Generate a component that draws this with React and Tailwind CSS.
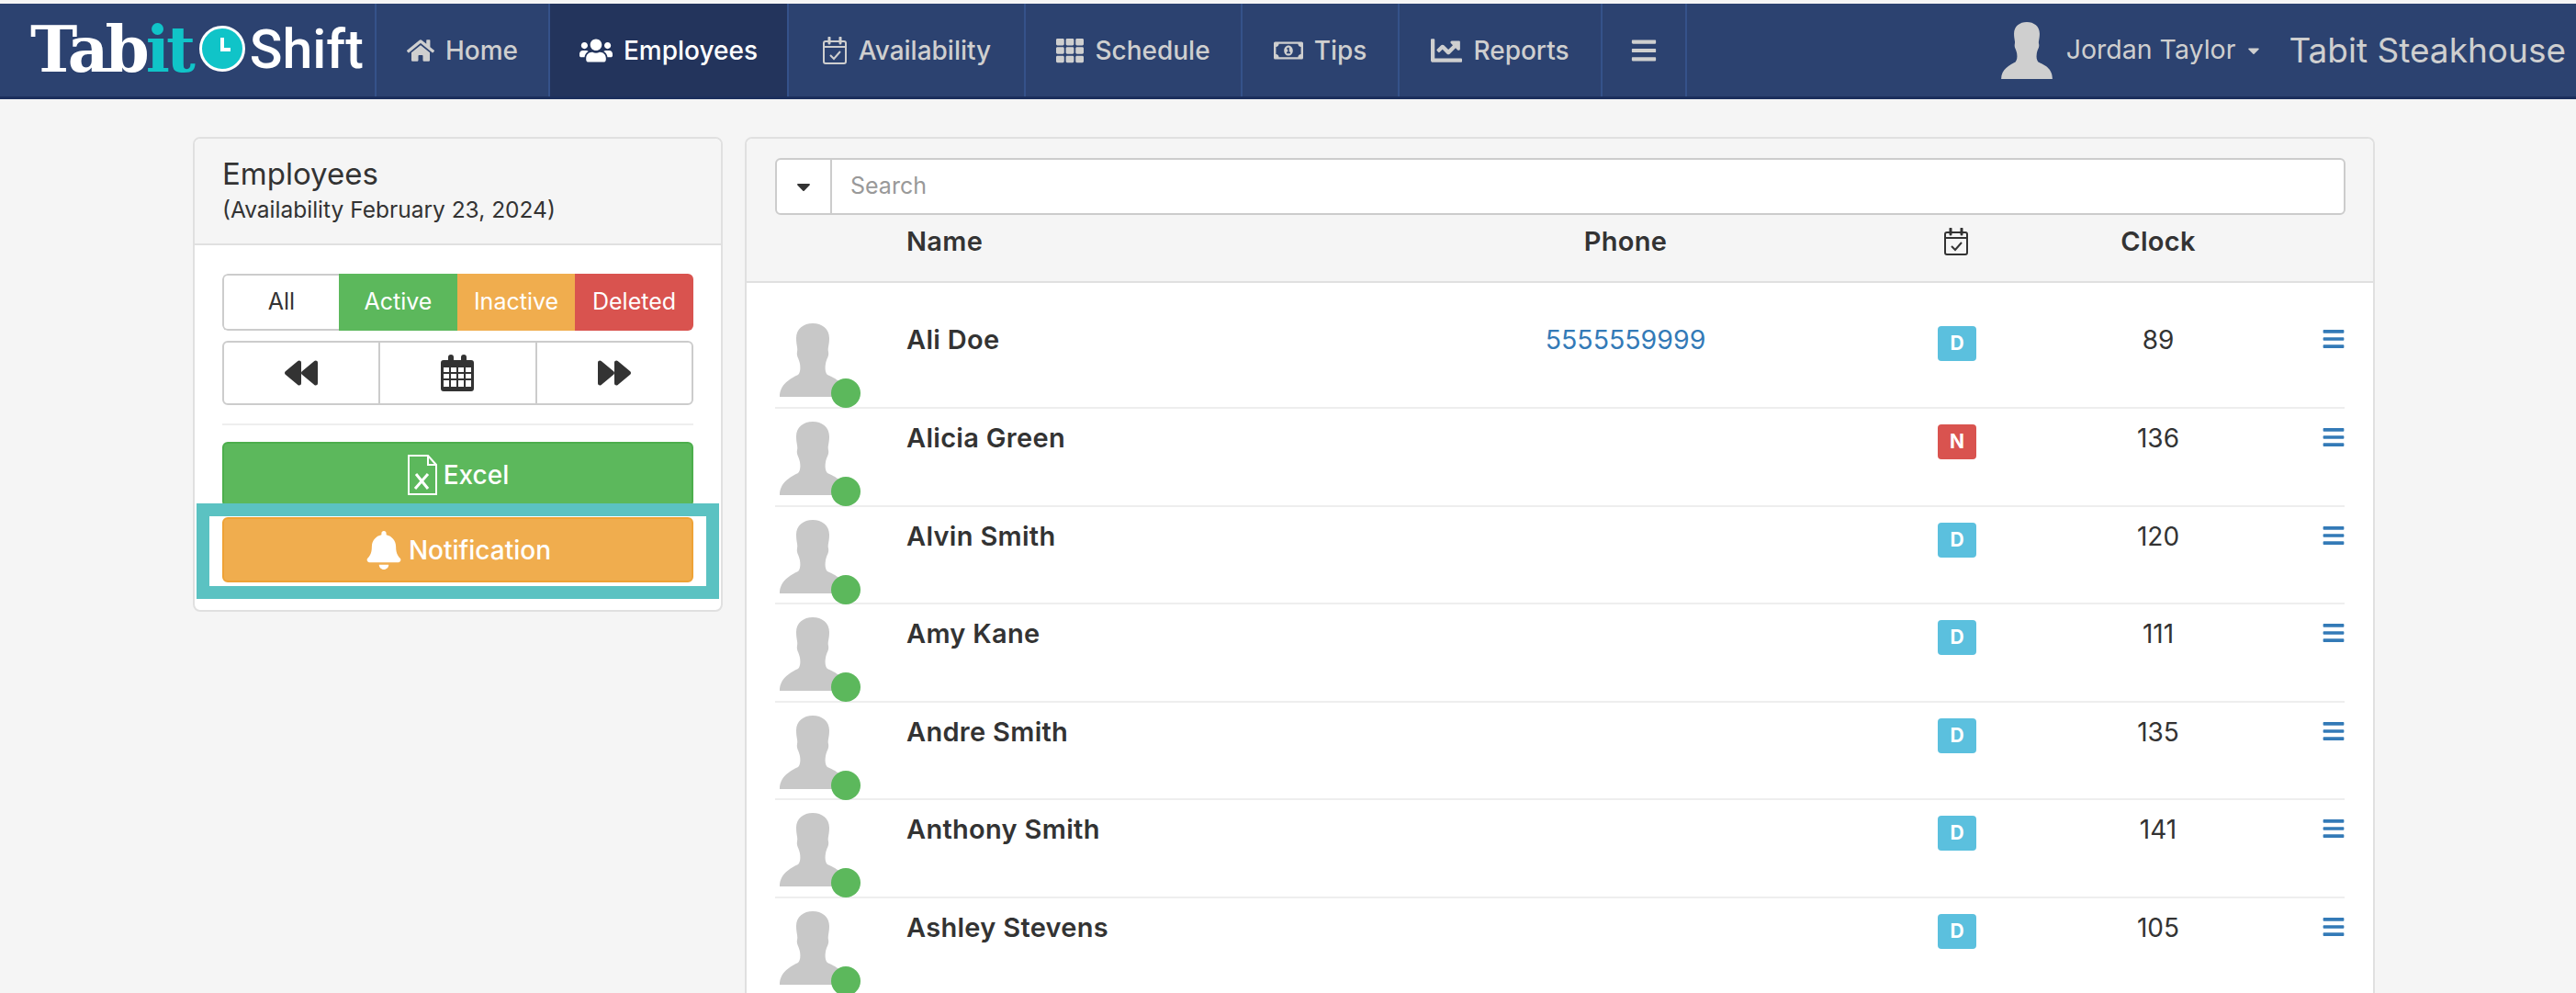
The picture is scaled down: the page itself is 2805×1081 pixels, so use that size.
import React from 'react';
import {
  FaHome, FaUsers, FaTh, FaRegMoneyBillAlt, FaChartLine, FaBars,
  FaBackward, FaForward, FaBell, FaCaretDown,
} from 'react-icons/fa';

function CalendarCheck({ className }) {
  return (
    <svg viewBox="0 0 28 30" className={className} fill="none" stroke="currentColor" strokeWidth="2">
      <rect x="2" y="5" width="24" height="24" rx="2" />
      <path d="M2 11h24" />
      <path d="M8 1v6M20 1v6" strokeWidth="3" strokeLinecap="round" />
      <path d="M9 20l4 4 7-8" />
    </svg>
  );
}

const navItems = [
  { label: 'Home', icon: <FaHome className="text-[30px]" />, width: 'w-[189px]' },
  { label: 'Employees', icon: <FaUsers className="text-[36px]" />, width: 'w-[260px]', active: true },
  { label: 'Availability', icon: <CalendarCheck className="w-[28px] h-[30px]" />, width: 'w-[258px]' },
  { label: 'Schedule', icon: <FaTh className="text-[30px]" />, width: 'w-[236px]' },
  { label: 'Tips', icon: <FaRegMoneyBillAlt className="text-[32px]" />, width: 'w-[171px]' },
  { label: 'Reports', icon: <FaChartLine className="text-[34px]" />, width: 'w-[221px]' },
  { label: '', icon: <FaBars className="text-[30px]" />, width: 'w-[92px]' },
];

const employees = [
  { name: 'Ali Doe', phone: '5555559999', shift: 'D', clock: 89 },
  { name: 'Alicia Green', shift: 'N', clock: 136 },
  { name: 'Alvin Smith', shift: 'D', clock: 120 },
  { name: 'Amy Kane', shift: 'D', clock: 111 },
  { name: 'Andre Smith', shift: 'D', clock: 135 },
  { name: 'Anthony Smith', shift: 'D', clock: 141 },
  { name: 'Ashley Stevens', shift: 'D', clock: 105 },
];

const COLUMNS = 'grid grid-cols-[143px_663px_240px_220px_140px_200px_104px]';

function Silhouette({ className }) {
  return (
    <svg viewBox="0 0 72 80" className={className} fill="currentColor">
      <path d="M36 0C46 0 54 6 54 16C54 24 52 27 53 31C54 36 51 38 50 44C49 50 50 54 52 56C60 60 72 64 72 80L0 80C0 66 12 60 20 56C22 54 23 50 22 44C21 38 18 36 19 31C20 27 18 24 18 16C18 6 26 0 36 0Z" />
    </svg>
  );
}

function CalendarGrid() {
  return (
    <svg viewBox="0 0 36 40" className="w-[36px] h-[40px] text-[#333]" fill="currentColor">
      <path d="M3 6h5V3a3 3 0 0 1 6 0v3h8V3a3 3 0 0 1 6 0v3h5a3 3 0 0 1 3 3v28a3 3 0 0 1-3 3H3a3 3 0 0 1-3-3V9a3 3 0 0 1 3-3Z" />
      <path
        d="M3 14h6v5H3zM11 14h6v5h-6zM19 14h6v5h-6zM27 14h6v5h-6zM3 21h6v5H3zM11 21h6v5h-6zM19 21h6v5h-6zM27 21h6v5h-6zM3 28h6v7H3zM11 28h6v7h-6zM19 28h6v7h-6zM27 28h6v7h-6z"
        fill="#fff"
      />
    </svg>
  );
}

function ExcelFile() {
  return (
    <svg viewBox="0 0 34 46" className="w-[34px] h-[46px]" fill="none" stroke="currentColor" strokeWidth="2">
      <path d="M2 2h21l9 10v32H2Z" />
      <path d="M23 2v10h9" />
      <path d="M10 22l13 16M23 22L9 38" strokeWidth="3" />
    </svg>
  );
}

function Logo() {
  return (
    <div className="w-[410px] h-full flex items-center pl-[33px] pb-[3px] border-r-2 border-[#35528a]">
      <span className="font-['DejaVu_Serif'] font-bold text-[69px] leading-none tracking-[-4px] text-white">
        Tab<span className="text-[#10c4c8]">it</span>
      </span>
      <svg viewBox="0 0 50 50" className="w-[50px] h-[50px] ml-[8px] shrink-0">
        <circle cx="25" cy="25" r="23.5" fill="#10c4c8" stroke="#fff" strokeWidth="3" />
        <path d="M25 13v13h9" fill="none" stroke="#fff" strokeWidth="4" />
      </svg>
      <span className="font-['Roboto'] font-medium text-[59px] leading-none text-white ml-[5px]">Shift</span>
    </div>
  );
}

function Header() {
  return (
    <div className="h-[104px] mt-[4px] flex items-center bg-[#2c4270] border-b-[3px] border-[#1c2f5c]">
      <Logo />
      {navItems.map(({ label, icon, width, active }, i) => (
        <div
          key={i}
          className={`${width} h-full flex items-center justify-center gap-[12px] border-r-2 border-[#35528a] text-[28px] font-medium ${
            active ? 'bg-[#23345c] text-white' : 'text-[#cfcfcf]'
          }`}
        >
          {icon}
          {label && <span>{label}</span>}
        </div>
      ))}
      <div className="ml-auto flex items-center text-[#cfcfcf] pr-[11px]">
        <Silhouette className="w-[56px] h-[62px] text-[#cfcfcf] mr-[15px]" />
        <span className="text-[28.5px]">Jordan Taylor</span>
        <FaCaretDown className="text-[20px] ml-[10px] mr-[28px]" />
        <span className="text-[37px]">Tabit Steakhouse</span>
      </div>
    </div>
  );
}

function Sidebar() {
  return (
    <div className="relative w-[577px] h-[517px] shrink-0 bg-white border-2 border-[#e0e0e0] rounded-lg overflow-hidden">
      <div className="h-[116px] bg-[#f5f5f5] border-b-2 border-[#e0e0e0] px-[30px] pt-[18px] text-[#333]">
        <div className="text-[33px] leading-[40px]">Employees</div>
        <div className="text-[24.5px] leading-[38px]">(Availability February 23, 2024)</div>
      </div>
      <div className="px-[30px] pt-[31px]">
        <div className="flex h-[62px] text-[25px] text-white rounded-md overflow-hidden">
          <div className="w-[127px] flex items-center justify-center text-[#333] border-2 border-r-0 border-[#ccc] rounded-l-md">All</div>
          <div className="w-[129px] flex items-center justify-center bg-[#5cb85c]">Active</div>
          <div className="w-[128px] flex items-center justify-center bg-[#f0ad4e]">Inactive</div>
          <div className="w-[129px] flex items-center justify-center bg-[#d9534f]">Deleted</div>
        </div>
        <div className="flex h-[70px] mt-[11px] border-2 border-[#ccc] rounded-md text-[#333]">
          <div className="flex-1 flex items-center justify-center border-r-2 border-[#ccc]">
            <FaBackward className="text-[36px]" />
          </div>
          <div className="flex-1 flex items-center justify-center border-r-2 border-[#ccc]">
            <CalendarGrid />
          </div>
          <div className="flex-1 flex items-center justify-center">
            <FaForward className="text-[36px]" />
          </div>
        </div>
        <div className="h-[2px] bg-[#eee] mt-[20px]" />
        <div className="h-[71px] mt-[18px] flex items-center justify-center gap-[6px] bg-[#5cb85c] border-2 border-[#4cae4c] rounded-md text-white text-[28px] font-medium">
          <ExcelFile />
          Excel
        </div>
        <div className="h-[71px] mt-[11px] flex items-center justify-center gap-[6px] bg-[#f0ad4e] border-2 border-[#eea236] rounded-md text-white text-[28px] font-medium">
          <FaBell className="text-[42px]" />
          Notification
        </div>
      </div>
      <div className="absolute left-[2px] top-[397px] w-[569px] h-[104px] border-[14px] border-[#5bc2c2]" />
    </div>
  );
}

function Row({ employee, first }) {
  return (
    <div className={`${COLUMNS} ${first ? 'h-[137px] pt-[30px]' : 'h-[106.5px]'} border-b-2 border-[#eee]`}>
      <div className="relative pl-[5px] pt-[14px]">
        <Silhouette className="w-[72px] h-[80px] text-[#c8c8c8]" />
        <div className="absolute left-[61px] top-[74px] w-[32px] h-[32px] rounded-full bg-[#5cb85c]" />
      </div>
      <div className="pt-[15px] text-[29px] tracking-[0.3px] leading-[34px] font-semibold text-[#333]">{employee.name}</div>
      <div className="pt-[15px] text-[28.5px] leading-[34px] text-center text-[#337ab7]">{employee.phone}</div>
      <div />
      <div className="pt-[17px]">
        <div
          className={`w-[42px] h-[38px] rounded-[4px] flex items-center justify-center text-white text-[21px] font-bold ${
            employee.shift === 'D' ? 'bg-[#5bc0de]' : 'bg-[#d9534f]'
          }`}
        >
          {employee.shift}
        </div>
      </div>
      <div className="pt-[15px] text-[28px] leading-[34px] text-center text-[#333]">{employee.clock}</div>
      <div className="pt-[18px] flex justify-end">
        <FaBars className="text-[26px] text-[#337ab7]" />
      </div>
    </div>
  );
}

function EmployeeList() {
  return (
    <div className="w-[1775px] shrink-0 h-[1000px] bg-white border-2 border-b-0 border-[#e0e0e0] rounded-t-lg overflow-hidden">
      <div className="h-[157px] bg-[#f5f5f5] border-b-2 border-[#e0e0e0] px-[31px] pt-[21px]">
        <div className="flex h-[62px] w-[1710px] bg-white border-2 border-[#ccc] rounded-md">
          <div className="w-[60px] flex items-center justify-center border-r-2 border-[#ccc] text-[#333]">
            <FaCaretDown className="text-[24px]" />
          </div>
          <div className="flex items-center pl-[20px] text-[25px] text-[#999]">Search</div>
        </div>
        <div className={`${COLUMNS} items-center h-[58px] text-[29px] tracking-[0.3px] font-semibold text-[#333]`}>
          <div />
          <div>Name</div>
          <div className="text-center">Phone</div>
          <div />
          <div className="pl-[6px]"><CalendarCheck className="w-[28px] h-[30px]" /></div>
          <div className="text-center">Clock</div>
          <div />
        </div>
      </div>
      <div className="px-[31px]">
        {employees.map((employee, i) => (
          <Row key={employee.name} employee={employee} first={i === 0} />
        ))}
      </div>
    </div>
  );
}

export default function App() {
  return (
    <div className="w-[2805px] h-[1081px] overflow-hidden bg-[#f5f5f5] font-['Inter','Noto_Sans',sans-serif]">
      <Header />
      <div className="flex gap-[24px] pl-[210px] pt-[41px]">
        <Sidebar />
        <EmployeeList />
      </div>
    </div>
  );
}
